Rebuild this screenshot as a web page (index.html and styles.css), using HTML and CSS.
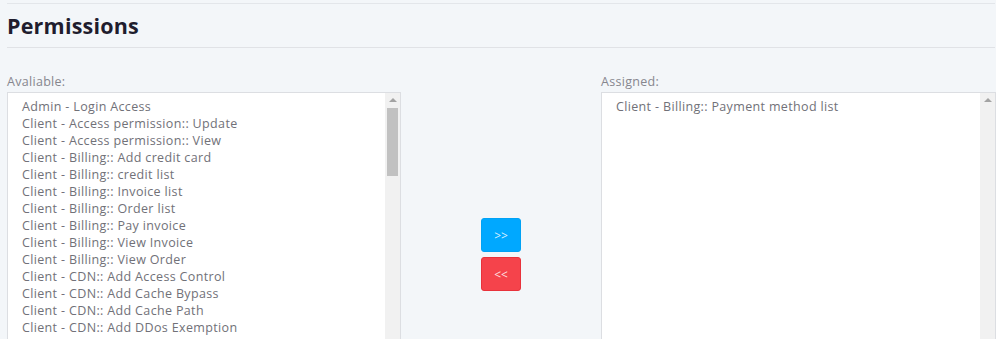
FILE: index.html
```html
<!DOCTYPE html>
<html>
<head>
<meta charset="utf-8">
<link rel="stylesheet" href="styles.css">
</head>
<body>
<div class="page">
  <div class="topline"></div>
  <h1 class="title">Permissions</h1>
  <div class="columns">
    <div class="col">
      <div class="label">Avaliable:</div>
      <div class="listbox">
        <ul class="items">
          <li>Admin - Login Access</li>
          <li>Client - Access permission:: Update</li>
          <li>Client - Access permission:: View</li>
          <li>Client - Billing:: Add credit card</li>
          <li>Client - Billing:: credit list</li>
          <li>Client - Billing:: Invoice list</li>
          <li>Client - Billing:: Order list</li>
          <li>Client - Billing:: Pay invoice</li>
          <li>Client - Billing:: View Invoice</li>
          <li>Client - Billing:: View Order</li>
          <li>Client - CDN:: Add Access Control</li>
          <li>Client - CDN:: Add Cache Bypass</li>
          <li>Client - CDN:: Add Cache Path</li>
          <li>Client - CDN:: Add DDos Exemption</li>
        </ul>
        <div class="scrollbar">
          <div class="arrow"></div>
          <div class="thumb"></div>
        </div>
      </div>
    </div>
    <div class="actions">
      <button class="btn btn-add">&gt;&gt;</button>
      <button class="btn btn-remove">&lt;&lt;</button>
    </div>
    <div class="col">
      <div class="label">Assigned:</div>
      <div class="listbox">
        <ul class="items">
          <li>Client - Billing:: Payment method list</li>
        </ul>
        <div class="scrollbar">
          <div class="arrow"></div>
        </div>
      </div>
    </div>
  </div>
</div>
</body>
</html>
```

FILE: styles.css
```css
html, body {
  margin: 0;
  padding: 0;
  background: #f3f6f9;
  overflow: hidden;
}
body {
  font-family: "Open Sans", "Liberation Sans", sans-serif;
}
.page {
  padding: 3px 0 0 7px;
}
.topline {
  border-top: 1px solid #e3e6ea;
  margin-right: 1px;
}
.title {
  margin: 0;
  height: 44px;
  box-sizing: border-box;
  padding-top: 7px;
  font-size: 21.5px;
  letter-spacing: 0.2px;
  line-height: 30px;
  font-weight: 700;
  color: #1f1d2e;
  border-bottom: 1px solid #e0e2e6;
  margin-right: 1px;
}
.columns {
  display: grid;
  grid-template-columns: 394px 200px 395px;
  margin-top: 26px;
}
.label {
  font-size: 12.5px;
  letter-spacing: 0.3px;
  line-height: 16px;
  color: #86868e;
  height: 18px;
}
.listbox {
  display: flex;
  height: 252px;
  background: #fff;
  border: 1px solid #dcdee2;
}
.items {
  flex: 1;
  list-style: none;
  margin: 0;
  padding: 5px 0 0 14px;
  overflow: hidden;
}
.items li {
  font-size: 12.5px;
  letter-spacing: 0.35px;
  line-height: 17px;
  color: #717178;
  white-space: nowrap;
}
.scrollbar {
  width: 15px;
  background: #f1f1f1;
  display: flex;
  flex-direction: column;
  align-items: center;
}
.arrow {
  margin-top: 5px;
  width: 0;
  height: 0;
  border-left: 4px solid transparent;
  border-right: 4px solid transparent;
  border-bottom: 4px solid #a3a3a3;
}
.thumb {
  margin-top: 6px;
  width: 11px;
  height: 68px;
  background: #c1c1c1;
}
.actions {
  display: flex;
  flex-direction: column;
  align-items: center;
  gap: 5px;
  padding-top: 144px;
}
.btn {
  width: 40px;
  height: 34px;
  border-radius: 3px;
  font-family: "Open Sans", "Liberation Sans", sans-serif;
  font-size: 12px;
  color: rgba(255,255,255,0.85);
  cursor: pointer;
  padding: 0;
}
.btn-add {
  background: #00a8ff;
  border: 1px solid #00a2f5;
}
.btn-remove {
  background: #f5434b;
  border: 1px solid #e8323b;
}
```
